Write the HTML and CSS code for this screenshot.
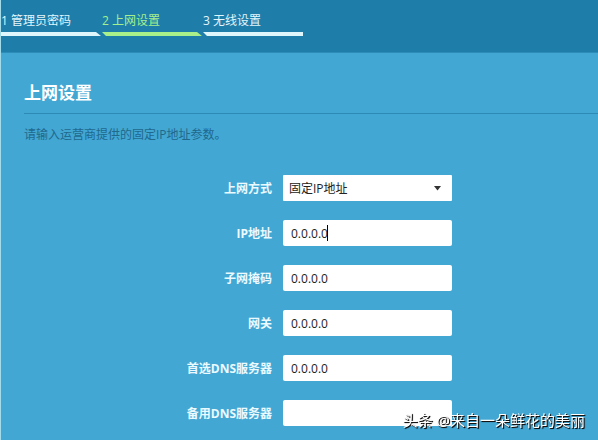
FILE: index.html
```html
<!DOCTYPE html>
<html lang="zh-CN">
<head>
<meta charset="utf-8">
<meta name="viewport" content="width=device-width, initial-scale=1">
<title>上网设置</title>
<link rel="stylesheet" href="styles.css">
</head>
<body>
<header class="header">
  <ol class="steps">
    <li class="step step-first">1 管理员密码</li>
    <li class="step step-middle step-active" aria-current="step">2 上网设置</li>
    <li class="step step-last">3 无线设置</li>
  </ol>
</header>
<main class="content">
  <h1 class="title">上网设置</h1>
  <p class="hint">请输入运营商提供的固定IP地址参数。</p>
  <form class="form">
    <label class="label" for="mode">上网方式</label>
    <div class="control">
      <select class="field select" id="mode"><option>固定IP地址</option></select>
      <svg class="arrow" viewBox="0 0 7 5" aria-hidden="true"><path d="M0 0h7L3.5 4.5z"/></svg>
    </div>
    <label class="label" for="ip">IP地址</label>
    <div class="control">
      <input class="field" id="ip" type="text" value="0.0.0.0">
      <span class="caret"></span>
    </div>
    <label class="label" for="mask">子网掩码</label>
    <div class="control"><input class="field" id="mask" type="text" value="0.0.0.0"></div>
    <label class="label" for="gateway">网关</label>
    <div class="control"><input class="field" id="gateway" type="text" value="0.0.0.0"></div>
    <label class="label" for="dns1">首选DNS服务器</label>
    <div class="control"><input class="field" id="dns1" type="text" value="0.0.0.0"></div>
    <label class="label" for="dns2">备用DNS服务器</label>
    <div class="control"><input class="field" id="dns2" type="text" value=""></div>
  </form>
</main>
<div class="watermark">头条 @来自一朵鲜花的美丽</div>
</body>
</html>
```
FILE: styles.css
```css
* {
  box-sizing: border-box;
}

body {
  margin: 0;
  min-height: 100vh;
  border-left: 1px solid #a5dcea;
  background: #43a7d4;
  color: #eafaff;
  font: 12px/18px "Open Sans", "Noto Sans CJK SC", sans-serif;
}

.header {
  height: 53px;
  padding-top: 12px;
  background: #1f7da9;
  border-bottom: 1px solid #2e8cb8;
}

.steps {
  display: flex;
  gap: 1px;
  margin: 0;
  padding: 0;
  list-style: none;
}

.step {
  width: 100px;
  color: #e2f6fd;
}

.step::after {
  content: "";
  display: block;
  height: 4px;
  margin-top: 2px;
  background: #dff6fd;
}

.step-first::after {
  clip-path: polygon(0 0, 95px 0, 100% 100%, 0 100%);
}

.step-middle::after {
  clip-path: polygon(0 0, 95px 0, 100% 100%, 4px 100%);
}

.step-last::after {
  clip-path: polygon(0 0, 100% 0, 100% 100%, 4px 100%);
}

.step-active {
  color: #a5ef8e;
}

.step-active::after {
  background: #a9f08a;
}

.content {
  padding: 28px 0 0 23px;
}

.title {
  margin: 0;
  padding-bottom: 8px;
  border-bottom: 1px solid #2d8ab5;
  color: #fff;
  font-size: 17px;
  line-height: 24px;
}

.hint {
  margin: 12px 0 31px;
  color: #20698c;
}

.form {
  display: grid;
  grid-template-columns: 248px 169px;
  column-gap: 11px;
  row-gap: 19px;
}

.label {
  font-weight: 700;
  line-height: 28px;
  height: 26px;
  text-align: right;
}

.control {
  position: relative;
}

.field {
  display: block;
  width: 100%;
  height: 26px;
  padding: 0 8px;
  border: 0;
  border-radius: 2px;
  outline: 0;
  background: #fff;
  color: #222;
  font: inherit;
}

.select {
  appearance: none;
  padding: 2px 6px 0;
  border-radius: 1px;
}

.arrow {
  position: absolute;
  top: 11px;
  right: 11px;
  width: 7px;
  height: 5px;
  fill: #333;
  pointer-events: none;
}

.caret {
  position: absolute;
  top: 5px;
  left: 44px;
  width: 1px;
  height: 16px;
  background: #000;
}

.watermark {
  position: fixed;
  right: 13px;
  bottom: 9px;
  color: #fff;
  font-size: 15px;
  line-height: 22px;
  text-shadow: 1px 1px 1px #111, 1px 1px 0 #222;
}
```
